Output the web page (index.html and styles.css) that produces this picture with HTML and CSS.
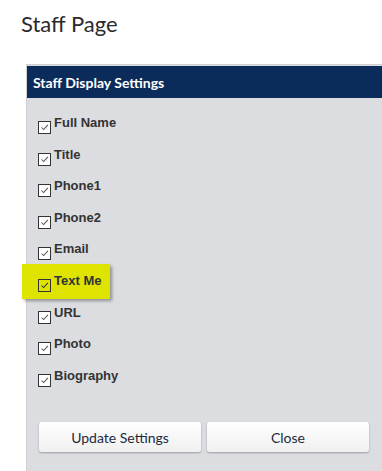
FILE: index.html
```html
<!DOCTYPE html>
<html lang="en">
<head>
    <meta charset="UTF-8">
    <meta name="viewport" content="width=device-width, initial-scale=1.0">
    <title>Staff Page</title>
    <link rel="stylesheet" href="styles.css">
</head>
<body>
    <h1 class="page-title">Staff Page</h1>

    <div class="panel">
        <div class="panel-header">Staff Display Settings</div>
        <div class="panel-body">
            <ul class="field-list">
                <li class="field"><span class="check"><svg viewBox="0 0 13 13"><path d="M3 6.5 L5.5 9 L10.5 3.5"/></svg></span>Full Name</li>
                <li class="field"><span class="check"><svg viewBox="0 0 13 13"><path d="M3 6.5 L5.5 9 L10.5 3.5"/></svg></span>Title</li>
                <li class="field"><span class="check"><svg viewBox="0 0 13 13"><path d="M3 6.5 L5.5 9 L10.5 3.5"/></svg></span>Phone1</li>
                <li class="field"><span class="check"><svg viewBox="0 0 13 13"><path d="M3 6.5 L5.5 9 L10.5 3.5"/></svg></span>Phone2</li>
                <li class="field"><span class="check"><svg viewBox="0 0 13 13"><path d="M3 6.5 L5.5 9 L10.5 3.5"/></svg></span>Email</li>
                <li class="field highlighted"><span class="check"><svg viewBox="0 0 13 13"><path d="M3 6.5 L5.5 9 L10.5 3.5"/></svg></span>Text Me</li>
                <li class="field"><span class="check"><svg viewBox="0 0 13 13"><path d="M3 6.5 L5.5 9 L10.5 3.5"/></svg></span>URL</li>
                <li class="field"><span class="check"><svg viewBox="0 0 13 13"><path d="M3 6.5 L5.5 9 L10.5 3.5"/></svg></span>Photo</li>
                <li class="field"><span class="check"><svg viewBox="0 0 13 13"><path d="M3 6.5 L5.5 9 L10.5 3.5"/></svg></span>Biography</li>
            </ul>

            <div class="actions">
                <button type="button" class="btn">Update Settings</button>
                <button type="button" class="btn">Close</button>
            </div>
        </div>
    </div>
</body>
</html>
```

FILE: styles.css
```css
body {
    margin: 0;
    padding: 0;
    background-color: #ffffff;
    font-family: Lato, "Open Sans", sans-serif;
    overflow: hidden;
}

.page-title {
    margin: 0;
    padding: 9px 0 0 21px;
    font-size: 22px;
    font-weight: 400;
    color: #2b2b2b;
    line-height: 30px;
}

.panel {
    margin: 25px 0 0 26px;
    border-top: 1px solid #cfd0d2;
    border-left: 1px solid #cfd0d2;
    background-color: #dcdde0;
    height: 420px;
}

.panel-header {
    background-color: #0b2b5a;
    color: #ffffff;
    font-weight: 700;
    font-size: 14px;
    height: 32px;
    line-height: 33px;
    padding-left: 6px;
    margin-top: 1px;
}

.panel-body {
    padding: 17px 0 0 11px;
}

.field-list {
    list-style: none;
    margin: 0;
    padding: 0;
}

.field {
    position: relative;
    display: flex;
    align-items: flex-start;
    height: 31.6px;
    font-family: "Liberation Sans", Arial, sans-serif;
    font-weight: 700;
    font-size: 13px;
    color: #333333;
    line-height: 15px;
}

.check {
    width: 11px;
    height: 11px;
    border: 1px solid #333333;
    background-color: #ffffff;
    margin: 6px 3px 0 0;
    flex-shrink: 0;
}

.check svg {
    display: block;
    width: 11px;
    height: 11px;
}

.check path {
    fill: none;
    stroke: #555555;
    stroke-width: 1.2;
}

/* resaltado amarillo sobre "Text Me" */
.highlighted {
    z-index: 1;
}

.highlighted::before {
    content: "";
    position: absolute;
    left: -16px;
    top: -9px;
    width: 88px;
    height: 35px;
    background-color: #dfe300;
    box-shadow: 2px 2px 3px rgba(0, 0, 0, 0.35);
    z-index: -1;
}

.highlighted .check {
    background-color: #dfe300;
}

.highlighted .check path {
    stroke: #333333;
}

.actions {
    display: flex;
    gap: 6px;
    margin: 23px 0 0 1px;
}

.btn {
    width: 162px;
    height: 30px;
    border: none;
    border-radius: 3px;
    background: linear-gradient(#ffffff, #f0f0f0);
    box-shadow: 0 1px 2px rgba(0, 0, 0, 0.3);
    font-family: Lato, "Open Sans", sans-serif;
    font-size: 14px;
    color: #1c2a3e;
    cursor: pointer;
}
```
